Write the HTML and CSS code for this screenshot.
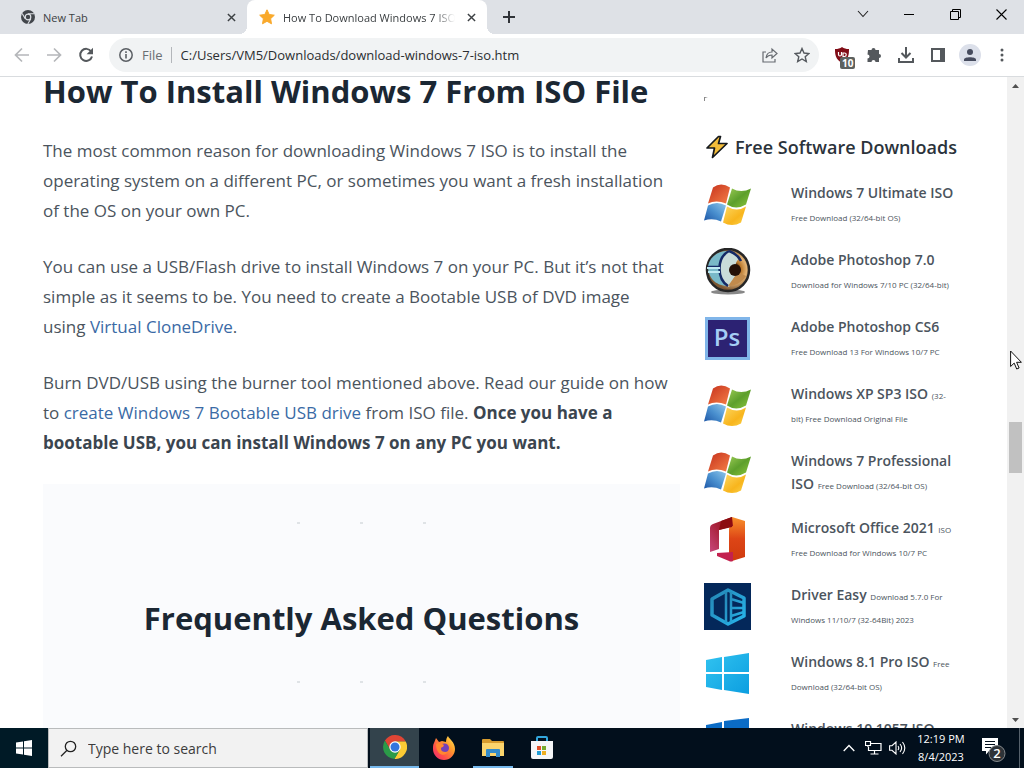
FILE: index.html
```html
<!DOCTYPE html>
<html lang="en">
<head>
<meta charset="utf-8">
<title>How To Download Windows 7 ISO</title>
<link rel="stylesheet" href="styles.css">
</head>
<body>
<svg class="defs" aria-hidden="true">
  <defs>
    <linearGradient id="red" x1="0" y1="0" x2="1" y2="1"><stop offset="0" stop-color="#c5301c"/><stop offset="1" stop-color="#f58047"/></linearGradient>
    <linearGradient id="green" x1="0" y1="0" x2="1" y2="1"><stop offset="0" stop-color="#9bcb55"/><stop offset=".5" stop-color="#5d9f2c"/><stop offset="1" stop-color="#8cc63c"/></linearGradient>
    <linearGradient id="blue" x1="0" y1="1" x2="1" y2="0"><stop offset="0" stop-color="#1c55a5"/><stop offset=".5" stop-color="#4a90cf"/><stop offset="1" stop-color="#8fc6ea"/></linearGradient>
    <linearGradient id="yellow" x1="0" y1="0" x2="1" y2="1"><stop offset="0" stop-color="#fdd760"/><stop offset=".6" stop-color="#f8b51d"/><stop offset="1" stop-color="#fbd34a"/></linearGradient>
    <linearGradient id="sky" x1="0" y1="0" x2="1" y2="1"><stop offset="0" stop-color="#31c3f0"/><stop offset="1" stop-color="#0c9ee0"/></linearGradient>
    <linearGradient id="office" x1="0" y1="0" x2="0" y2="1"><stop offset="0" stop-color="#f9922b"/><stop offset=".5" stop-color="#dd4516"/><stop offset="1" stop-color="#cf3a0e"/></linearGradient>
    <linearGradient id="wine" x1="0" y1="1" x2="1" y2="0"><stop offset="0" stop-color="#c8477b"/><stop offset=".5" stop-color="#a9233c"/><stop offset="1" stop-color="#8c0c10"/></linearGradient>
    <linearGradient id="fox" x1="1" y1="0" x2="0" y2="1"><stop offset="0" stop-color="#fff05a"/><stop offset=".35" stop-color="#ff9c2c"/><stop offset=".7" stop-color="#ff4b4b"/><stop offset="1" stop-color="#e62a76"/></linearGradient>
    <linearGradient id="driver" x1="0" y1="0" x2="1" y2="1"><stop offset="0" stop-color="#2587b5"/><stop offset="1" stop-color="#27b6ec"/></linearGradient>
    <radialGradient id="eye" cx=".62" cy=".48" r=".5"><stop offset="0" stop-color="#2c1406"/><stop offset=".22" stop-color="#3b1d0b"/><stop offset=".38" stop-color="#b8772b"/><stop offset=".65" stop-color="#e3b374"/><stop offset="1" stop-color="#7c5732"/></radialGradient>
    <symbol id="flag" viewBox="0 0 47 44">
      <path fill="url(#red)" d="M9 5Q17-1 26 5L22 21Q12 17 4 21Z"/>
      <path fill="url(#green)" d="M28 6Q37 11 47 6L42 22Q32 28 23 22Z"/>
      <path fill="url(#blue)" d="M4 23Q13 18 22 23L17 39Q9 35 0 38Z"/>
      <path fill="url(#yellow)" d="M23 24Q33 30 42 24L37 40Q28 45 19 40Z"/>
    </symbol>
    <symbol id="x" viewBox="0 0 10 10"><path d="M1 1l8 8M9 1l-8 8" stroke="currentColor" stroke-width="1.6"/></symbol>
  </defs>
</svg>

<div class="window">
  <header class="tabs">
    <div class="tab">
      <svg width="14" height="14" viewBox="0 0 14 14"><circle cx="7" cy="7" r="7" fill="#42464b"/><circle cx="7" cy="7" r="2.8" fill="none" stroke="#dee1e6" stroke-width="1.2"/><path d="M7 3.7h6M4.2 8.7L1.2 3.4M9.8 8.7L6.8 14" stroke="#dee1e6" stroke-width="1.1"/></svg>
      <span class="tab-title">New Tab</span>
      <button class="tab-close" aria-label="Close New Tab"><svg width="9" height="9"><use href="#x"/></svg></button>
    </div>
    <div class="tab active">
      <svg width="16" height="16" viewBox="0 0 16 16"><path fill="#f9a92b" stroke="#f9a92b" stroke-width="1" stroke-linejoin="round" d="M8 .8l2.2 4.7 5.1.7-3.7 3.5.9 5.1L8 12.3l-4.5 2.5.9-5.1L.7 6.2l5.1-.7z"/></svg>
      <span class="tab-title fade">How To Download Windows 7 ISO</span>
      <button class="tab-close" aria-label="Close tab"><svg width="9" height="9"><use href="#x"/></svg></button>
    </div>
    <button class="new-tab" aria-label="New tab"><svg width="12" height="12" viewBox="0 0 12 12"><path d="M6 0v12M0 6h12" stroke="#303338" stroke-width="2"/></svg></button>
    <div class="controls">
      <button aria-label="Search tabs"><svg width="12" height="12" viewBox="0 0 12 12"><path d="M1 3l5 5.5L11 3" fill="none" stroke="#222" stroke-width="1.1"/></svg></button>
      <button aria-label="Minimize"><svg width="10" height="10" viewBox="0 0 10 10"><path d="M0 5.5h10" stroke="#000"/></svg></button>
      <button aria-label="Restore"><svg width="11" height="11" viewBox="0 0 11 11"><path d="M.5 2.5h8v8h-8zM2.5 2.5v-2h8v8h-2" fill="none" stroke="#000"/></svg></button>
      <button aria-label="Close window"><svg width="11" height="11" viewBox="0 0 11 11"><path d="M.5.5l10 10M10.5.5l-10 10" stroke="#000" stroke-width="1.1"/></svg></button>
    </div>
  </header>

  <nav class="toolbar">
    <button class="dim" aria-label="Back"><svg width="16" height="16" viewBox="0 0 16 16"><path d="M15 8H2M8 1.5L1.5 8 8 14.5" fill="none" stroke="currentColor" stroke-width="1.7"/></svg></button>
    <button class="dim" aria-label="Forward"><svg width="16" height="16" viewBox="0 0 16 16"><path d="M1 8h13M8 1.5L14.5 8 8 14.5" fill="none" stroke="currentColor" stroke-width="1.7"/></svg></button>
    <button aria-label="Reload"><svg width="16" height="16" viewBox="0 0 16 16"><path d="M13.2 4.5A6 6 0 1 0 14 9.5" fill="none" stroke="currentColor" stroke-width="2"/><path d="M15 .8v6.4H8.6z" fill="currentColor"/></svg></button>
    <div class="omnibox">
      <svg width="14" height="14" viewBox="0 0 14 14"><circle cx="7" cy="7" r="6.2" fill="none" stroke="#5b5f64" stroke-width="1.5"/><path d="M7 6v4.5M7 3.3v1.7" stroke="#5b5f64" stroke-width="1.6"/></svg>
      <label class="scheme" for="address">File</label>
      <input id="address" class="address" type="text" value="C:/Users/VM5/Downloads/download-windows-7-iso.htm">
      <button aria-label="Share"><svg width="16" height="16" viewBox="0 0 16 16"><path d="M4 5H1v10h12v-3M4 11c.5-4 3-6 6-6V2l5 4.5-5 4.5V8c-3 0-4.5.8-6 3z" fill="none" stroke="#676b70" stroke-width="1.2"/></svg></button>
      <button aria-label="Bookmark"><svg width="16" height="16" viewBox="0 0 16 16"><path d="M8 1.5l2 4.5 4.900.5-3.700 3.200 1.100 4.800L8 12l-4.300 2.500 1.100-4.800L1.100 6.500 6 6z" fill="none" stroke="#55595e" stroke-width="1.4"/></svg></button>
    </div>
    <button aria-label="Ad blocker, 10 blocked"><span class="shield"><svg width="14" height="16" viewBox="0 0 14 16"><path d="M7 0c2 1.500 4 2 7 2 0 6-.5 10-7 14C.5 12 0 8 0 2c3 0 5-.5 7-2z" fill="#800c16"/><path d="M3.500 5v2.500a1.500 1.500 0 0 0 3 0V5M8 11V6h1.500a1.500 1.500 0 0 1 0 3.500H8" fill="none" stroke="#fff" stroke-width="1.2"/></svg><span class="badge">10</span></span></button>
    <button aria-label="Extensions"><svg width="16" height="16" viewBox="0 0 16 16"><path d="M2 3h3.500a2 2 0 1 1 4 0H13v4a2 2 0 1 1 0 4v4H9.500a2 2 0 1 0-4 0H1.500v-3.500a2 2 0 1 0 0-4z" fill="currentColor"/></svg></button>
    <button aria-label="Downloads"><svg width="16" height="16" viewBox="0 0 16 16"><path d="M8 0v10M3.500 6L8 10.500 12.500 6M1 11v4h14v-4" fill="none" stroke="currentColor" stroke-width="2"/></svg></button>
    <button aria-label="Side panel"><svg width="14" height="14" viewBox="0 0 14 14"><path d="M1 1h12v12H1z" fill="none" stroke="currentColor" stroke-width="2"/><path d="M9 1h4v12H9z" fill="currentColor"/></svg></button>
    <button aria-label="Profile"><svg width="22" height="22" viewBox="0 0 22 22"><circle cx="11" cy="11" r="11" fill="#dce0ea"/><circle cx="11" cy="8" r="3" fill="#464b5d"/><path d="M5 17v-1.500c0-3 12-3 12 0V17z" fill="#464b5d"/></svg></button>
    <button aria-label="Menu"><svg width="4" height="14" viewBox="0 0 4 14"><g fill="currentColor"><circle cx="2" cy="2" r="1.5"/><circle cx="2" cy="7" r="1.5"/><circle cx="2" cy="12" r="1.5"/></g></svg></button>
  </nav>

  <div class="viewport">
    <div class="page">
      <main class="article">
        <h2>How To Install Windows 7 From ISO File</h2>
        <p>The most common reason for downloading Windows 7 ISO is to install the<br>operating system on a different PC, or sometimes you want a fresh installation<br>of the OS on your own PC.</p>
        <p>You can use a USB/Flash drive to install Windows 7 on your PC. But it’s not that<br>simple as it seems to be. You need to create a Bootable USB of DVD image<br>using <a href="#">Virtual CloneDrive</a>.</p>
        <p>Burn DVD/USB using the burner tool mentioned above. Read our guide on how<br>to <a href="#">create Windows 7 Bootable USB drive</a> from ISO file. <strong>Once you have a<br>bootable USB, you can install Windows 7 on any PC you want.</strong></p>
        <section class="faq">
          <div class="dots"><i></i><i></i><i></i></div>
          <h2>Frequently Asked Questions</h2>
          <div class="dots"><i></i><i></i><i></i></div>
        </section>
      </main>

      <aside class="sidebar">
        <svg class="speck" width="4" height="4" viewBox="0 0 4 4"><path d="M0 0h4L1 1v3H0z" fill="#888"/></svg>
        <h3><svg width="22" height="24" viewBox="0 0 22 24"><path d="M12.5 1.5L1 13h7.500L6.500 22.500 21 8.500h-8.500L14.500 1.500z" fill="#f4bd3a" stroke="#15191d" stroke-width="1.7" stroke-linejoin="round"/></svg>Free Software Downloads</h3>
        <ul class="downloads">
          <li><svg class="logo" viewBox="0 0 47 44"><use href="#flag"/></svg><div><a href="#">Windows 7 Ultimate ISO</a><br><small>Free Download (32/64-bit OS)</small></div></li>
          <li><svg class="logo" viewBox="0 0 47 47"><ellipse cx="24" cy="44" rx="17" ry="2.5" fill="#555" opacity=".7"/><circle cx="24" cy="22" r="21" fill="url(#eye)" stroke="#262626" stroke-width="2.5"/><path d="M4 18C6 8 15 3 23 3c-9 8-9 26 1 35C14 38 4 32 4 18z" fill="#79b9c8"/><path d="M24 3c-12 9-10 28 1 36 4-6 5-11 9-13-4-6-3-13 2-16-4-4-7-7-12-7z" fill="#c9dcd9"/><path d="M25 3c-13 7-12 28-1 35M4 19h12M25 3c6 2 10 6 12 10" fill="none" stroke="#152a66" stroke-width="2.5"/><path d="M3 20h13M4 24h12" stroke="#bfeaf3" stroke-width="2"/><path d="M24 38c6 0 14-3 18-10l-8-4z" fill="#c08a4c"/><circle cx="31" cy="22" r="6" fill="#241006"/></svg><div><a href="#">Adobe Photoshop 7.0</a><br><small>Download for Windows 7/10 PC (32/64-bit)</small></div></li>
          <li><svg class="logo" viewBox="0 0 47 47"><path d="M2.5 3.5h42v40h-42z" fill="#2c2273" stroke="#80b5e9" stroke-width="3"/><text x="23" y="31" text-anchor="middle" class="ps">Ps</text></svg><div><a href="#">Adobe Photoshop CS6</a><br><small>Free Download 13 For Windows 10/7 PC</small></div></li>
          <li><svg class="logo" viewBox="0 0 47 44"><use href="#flag"/></svg><div><a href="#">Windows XP SP3 ISO</a> <small>(32-<br>bit) Free Download Original File</small></div></li>
          <li><svg class="logo" viewBox="0 0 47 44"><use href="#flag"/></svg><div><a href="#">Windows 7 Professional<br>ISO</a> <small>Free Download (32/64-bit OS)</small></div></li>
          <li><svg class="logo" viewBox="0 0 47 47"><path d="M28 1l13 4v36l-13 4-3-2V13z" fill="url(#office)"/><path d="M28 1L9 8q-3 1-3 4v24l9-3V14l14-4z" fill="url(#wine)"/><path d="M28 1v10L15 14l2-9z" fill="#8c0c10"/><path d="M13 37l16-1v9q-2 1-4 0L13 40z" fill="#c3214e"/></svg><div><a href="#">Microsoft Office 2021</a> <small>ISO<br>Free Download for Windows 10/7 PC</small></div></li>
          <li><svg class="logo" viewBox="0 0 47 47"><path d="M0 0h47v47H0z" fill="#04285a"/><path d="M24 7L8 16v16l16 9 16-8V15z" fill="none" stroke="url(#driver)" stroke-width="3.5" stroke-linejoin="round"/><path d="M22 9v31M27 9v31M27 16l13 4M27 25h13M27 33l13-4" fill="none" stroke="url(#driver)" stroke-width="2.5"/></svg><div><a href="#">Driver Easy</a> <small>Download 5.7.0 For<br>Windows 11/10/7 (32-64Bit) 2023</small></div></li>
          <li><svg class="logo" viewBox="0 0 47 47"><path d="M2 10l16-3v15H2zM20 7l25-4v19H20zM2 24h16v16L2 37zM20 24h25v20l-25-4z" fill="url(#sky)"/></svg><div><a href="#">Windows 8.1 Pro ISO</a> <small>Free<br>Download (32/64-bit OS)</small></div></li>
          <li><svg class="logo" viewBox="0 0 47 47"><path d="M2 8l16-3v15H2zM20 4l25-3v19H20zM2 22h16v16L2 35zM20 22h25v20l-25-4z" fill="#0b6cc6"/></svg><div><a href="#">Windows 10 1057 ISO</a></div></li>
        </ul>
      </aside>
    </div>
    <div class="scrollbar">
      <button aria-label="Scroll up"><svg width="7" height="4" viewBox="0 0 7 4"><path d="M0 4L3.500 0 7 4z" fill="#505050"/></svg></button>
      <div class="track"><div class="thumb"></div></div>
      <button aria-label="Scroll down"><svg width="7" height="4" viewBox="0 0 7 4"><path d="M0 0l3.500 4L7 0z" fill="#505050"/></svg></button>
    </div>
  </div>

  <footer class="taskbar">
    <button class="start" aria-label="Start"><svg width="16" height="16" viewBox="0 0 16 16"><path d="M0 2.500L7 1.500v6H0zM8 1.300L16 0v7.500H8zM0 8.500h7v6l-7-1zM8 8.500h8V16l-8-1.300z" fill="#fff"/></svg></button>
    <div class="search">
      <svg width="17" height="17" viewBox="0 0 17 17"><circle cx="10.5" cy="6.5" r="5.2" fill="none" stroke="#222" stroke-width="1.3"/><path d="M7 10.300L1 16.300" stroke="#222" stroke-width="1.3"/></svg>
      <input type="text" placeholder="Type here to search" aria-label="Type here to search">
    </div>
    <button class="app current" aria-label="Chrome"><svg width="24" height="24" viewBox="0 0 24 24"><path d="M12 6.500h10.700A12 12 0 0 0 1.900 5.600l5.300 9.200z" fill="#df4535"/><path d="M22.700 6.500A12 12 0 0 1 11.400 24l5.400-9.200L12 6.500z" fill="#fccb34"/><path d="M1.900 5.600A12 12 0 0 0 11.400 24l5.400-9.200H7.200z" fill="#2b9b48"/><circle cx="12" cy="12" r="5.7" fill="#fff"/><circle cx="12" cy="12" r="4.5" fill="#3475dd"/></svg></button>
    <button class="app" aria-label="Firefox"><svg width="24" height="24" viewBox="0 0 24 24"><path d="M2 7l2-5 3 4 3-1 4 1c0-3 1-5 2-6 1 3 7 6 7 13a11 11 0 0 1-22 0c0-3 0-4 1-6z" fill="url(#fox)"/><circle cx="12.500" cy="12" r="4.5" fill="#7540b8"/><path d="M4 8c3-2 5-1 8 1l-1 2c-2 0-2 1-2 2 0 3 5 4 7 2-1 4-6 5-9 2-2-2-3-5-3-9z" fill="#ff8730"/></svg></button>
    <button class="app open" aria-label="File Explorer"><svg width="22" height="20" viewBox="0 0 22 20"><path d="M0 2q0-1 1-1h7l2 2h11q1 0 1 1v14H0z" fill="#d89c2e"/><path d="M0 5h22v13H0z" fill="#fbd46c"/><path d="M4 19v-7q0-1 1-1h12q1 0 1 1v7h-4v-4H8v4z" fill="#348bc9"/></svg></button>
    <button class="app" aria-label="Microsoft Store"><svg width="24" height="24" viewBox="0 0 24 24"><path d="M7 6V2q0-1 1-1h8q1 0 1 1v4" fill="none" stroke="#32a6dc" stroke-width="2"/><path d="M1 5h22v16q0 2-2 2H3q-2 0-2-2z" fill="#f5f6f8"/><path d="M7 10h4v4H7z" fill="#e2502b"/><path d="M12 10h4v4h-4z" fill="#76ab2e"/><path d="M7 15h4v4H7z" fill="#209cd5"/><path d="M12 15h4v4h-4z" fill="#edae20"/></svg></button>
    <div class="tray">
      <button aria-label="Hidden icons"><svg width="12" height="8" viewBox="0 0 12 8"><path d="M.7 7L6 1.500 11.300 7" fill="none" stroke="#fff" stroke-width="1.3"/></svg></button>
      <button aria-label="Network"><svg width="17" height="14" viewBox="0 0 17 14"><path d="M6 2.500h10v7H3.500V6M9.500 9.500V13M5.500 13h8M.5.5h5v4h-5zM3 4.500V6" fill="none" stroke="#fff" stroke-width="1.2"/></svg></button>
      <button aria-label="Volume"><svg width="17" height="14" viewBox="0 0 17 14"><path d="M.6 4.700h2.400L7 1v12L3 9.300H.6zM9 5q1.500 2 0 4M11 3q3.300 4 0 8M13.500 1q4.600 6 0 12" fill="none" stroke="#fff" stroke-width="1.1"/></svg></button>
      <button class="clock">12:19 PM<br>8/4/2023</button>
      <button class="notes" aria-label="Notifications, 2 new"><svg width="24" height="24" viewBox="0 0 24 24"><path d="M0 0h16v13H7l-3 3.500V13H0z" fill="#fff"/><path d="M3 3.500h10M3 6.500h10M3 9.500h6" stroke="#020f1c" stroke-width="1.2"/><circle cx="15" cy="15.5" r="8" fill="#2e3338" stroke="#85898d"/><text x="15" y="20" text-anchor="middle" class="count">2</text></svg></button>
    </div>
  </footer>
  <svg class="cursor" width="12" height="20" viewBox="0 0 12 20"><path d="M.6 1v15.500l3.600-3.400L6.700 19l2.400-1-2.500-5.700h4.800z" fill="#fff" stroke="#111"/></svg>
</div>
</body>
</html>
```
FILE: styles.css
```css
* { box-sizing: border-box; }

body {
  margin: 0;
  font-family: "Open Sans", "Noto Sans", sans-serif;
  color: #4b545d;
  background: #fff;
}

button {
  display: flex;
  align-items: center;
  justify-content: center;
  flex: none;
  padding: 0;
  border: 0;
  background: none;
  color: inherit;
  font: inherit;
}

svg { flex: none; }
a { color: #3a6aa5; text-decoration: none; }
.defs { position: absolute; width: 0; height: 0; }

.window {
  position: relative;
  display: flex;
  flex-direction: column;
  height: 100vh;
  overflow: hidden;
}

/* Tab strip */
.tabs {
  display: flex;
  flex: none;
  height: 34px;
  background: #dee1e6;
  color: #3c4043;
  font-size: 11px;
}
.tab {
  display: flex;
  align-items: center;
  gap: 8px;
  width: 247px;
  padding: 0 8px 0 21px;
}
.tab.active {
  position: relative;
  width: 240px;
  padding-left: 12px;
  border-radius: 8px 8px 0 0;
  background: #fff;
}
.tab.active::before,
.tab.active::after {
  content: "";
  position: absolute;
  bottom: 0;
  width: 8px;
  height: 8px;
}
.tab.active::before { left: -8px; background: radial-gradient(circle at 0 0, transparent 8px, #fff 8px); }
.tab.active::after { right: -8px; background: radial-gradient(circle at 100% 0, transparent 8px, #fff 8px); }
.tab-title {
  flex: 1;
  overflow: hidden;
  white-space: nowrap;
}
.fade { mask-image: linear-gradient(to right, #000 88%, transparent); }
.tab-close { width: 16px; height: 16px; }
.new-tab { width: 44px; }
.controls { display: flex; margin-left: auto; padding-bottom: 6px; }
.controls button { width: 46px; }

/* Toolbar */
.toolbar {
  display: flex;
  align-items: center;
  flex: none;
  height: 43px;
  padding: 0 6px;
  border-bottom: 1px solid #d9dcdf;
  color: #54585c;
}
.toolbar button { width: 32px; height: 32px; }
.toolbar .dim { color: #b5b7ba; }
.omnibox {
  display: flex;
  align-items: center;
  flex: 1;
  height: 34px;
  margin: 0 7px;
  padding: 0 1px 0 10px;
  border-radius: 17px;
  background: #f1f3f4;
  font-size: 13px;
}
.scheme {
  margin: 0 9px 0 9px;
  padding-right: 8px;
  border-right: 1px solid #b3b6ba;
  line-height: 16px;
  color: #6a6e72;
}
.address {
  flex: 1;
  min-width: 0;
  padding: 0;
  border: 0;
  background: none;
  color: #2b2e31;
  font: inherit;
}
.shield { position: relative; display: flex; }
.badge {
  position: absolute;
  left: 5px;
  top: 10px;
  padding: 0 2px;
  border-radius: 2px;
  background: #5d615f;
  color: #fff;
  font-size: 10px;
  font-weight: 700;
  line-height: 12px;
}

/* Page */
.viewport {
  display: flex;
  flex: 1;
  min-height: 0;
}
.page {
  display: flex;
  flex: 1;
  gap: 24px;
  min-width: 0;
  padding: 0 43px;
  overflow: hidden;
}
.article {
  display: flex;
  flex-direction: column;
  flex: 1;
  gap: 26px;
  min-width: 0;
  font-size: 17px;
  line-height: 30px;
  white-space: nowrap;
}
.article h2 {
  margin: 0 0 5px;
  color: #1b2733;
  font-size: 31px;
  font-weight: 700;
  line-height: 28px;
}
.article p { margin: 0; }
.article strong { color: #3b454f; }
.faq {
  display: flex;
  flex-direction: column;
  flex: none;
  align-items: center;
  padding: 38px 0 80px;
  background: #fafbfd;
}
.article .faq h2 { margin: 80px 0 49px; }
.dots { display: flex; gap: 60px; }
.dots i { width: 3px; height: 2px; background: #dfe3e6; }

.sidebar { width: 260px; flex: none; }
.speck { display: block; margin-top: 20px; }
.sidebar h3 {
  display: flex;
  align-items: center;
  gap: 7px;
  margin: 31px 0 18px 2px;
  color: #2b333b;
  font-size: 18px;
  font-weight: 600;
  line-height: 30px;
  white-space: nowrap;
}
.downloads {
  display: grid;
  gap: 19px;
  margin: 0;
  padding: 0;
  list-style: none;
}
.downloads li {
  display: flex;
  gap: 40px;
  height: 48px;
  padding-top: 1px;
  font-size: 14px;
  line-height: 23px;
  white-space: nowrap;
}
.downloads a { color: #4b545d; font-weight: 600; }
.downloads small { font-size: 8px; line-height: 1; }
.logo { width: 47px; height: 47px; }
.ps { fill: #a5cdf5; font: 600 24px "Open Sans", sans-serif; }

.scrollbar {
  display: flex;
  flex-direction: column;
  width: 17px;
  background: #f1f1f1;
}
.scrollbar button { height: 17px; }
.track { display: flex; flex: 1; flex-direction: column; padding: 0 2px; }
.track::before { content: ""; flex: 328; }
.track::after { content: ""; flex: 238; }
.thumb { flex: 51; background: #c1c1c1; }
.cursor { position: absolute; right: 2px; top: 350px; }

/* Taskbar */
.taskbar {
  display: flex;
  flex: none;
  height: 40px;
  background: #020f1c;
  color: #fff;
}
.start { width: 48px; background: #001a26; }
.search {
  display: flex;
  align-items: center;
  gap: 11px;
  width: 320px;
  margin-right: 2px;
  padding: 0 11px;
  border: 1px solid #b9bbbc;
  background: #f2f2f2;
}
.search input {
  flex: 1;
  min-width: 0;
  padding: 0;
  border: 0;
  background: none;
  font: 14px "Open Sans", sans-serif;
}
.search input::placeholder { color: #3c3c3c; }
.app { width: 49px; }
.current { background: #33434c; border-bottom: 2px solid #76b9ed; }
.open { background: linear-gradient(#76b9ed, #76b9ed) center bottom / 40px 2px no-repeat; }
.tray {
  display: flex;
  align-items: center;
  margin-left: auto;
  margin-right: 4px;
  padding-right: 4px;
  border-right: 1px solid #56616b;
}
.tray button { width: 24px; height: 40px; }
.tray .clock { width: 64px; font-size: 11px; line-height: 18px; }
.tray .notes { width: 42px; padding-top: 4px; }
.count { fill: #fff; font: 600 13px "Open Sans", sans-serif; }
```
